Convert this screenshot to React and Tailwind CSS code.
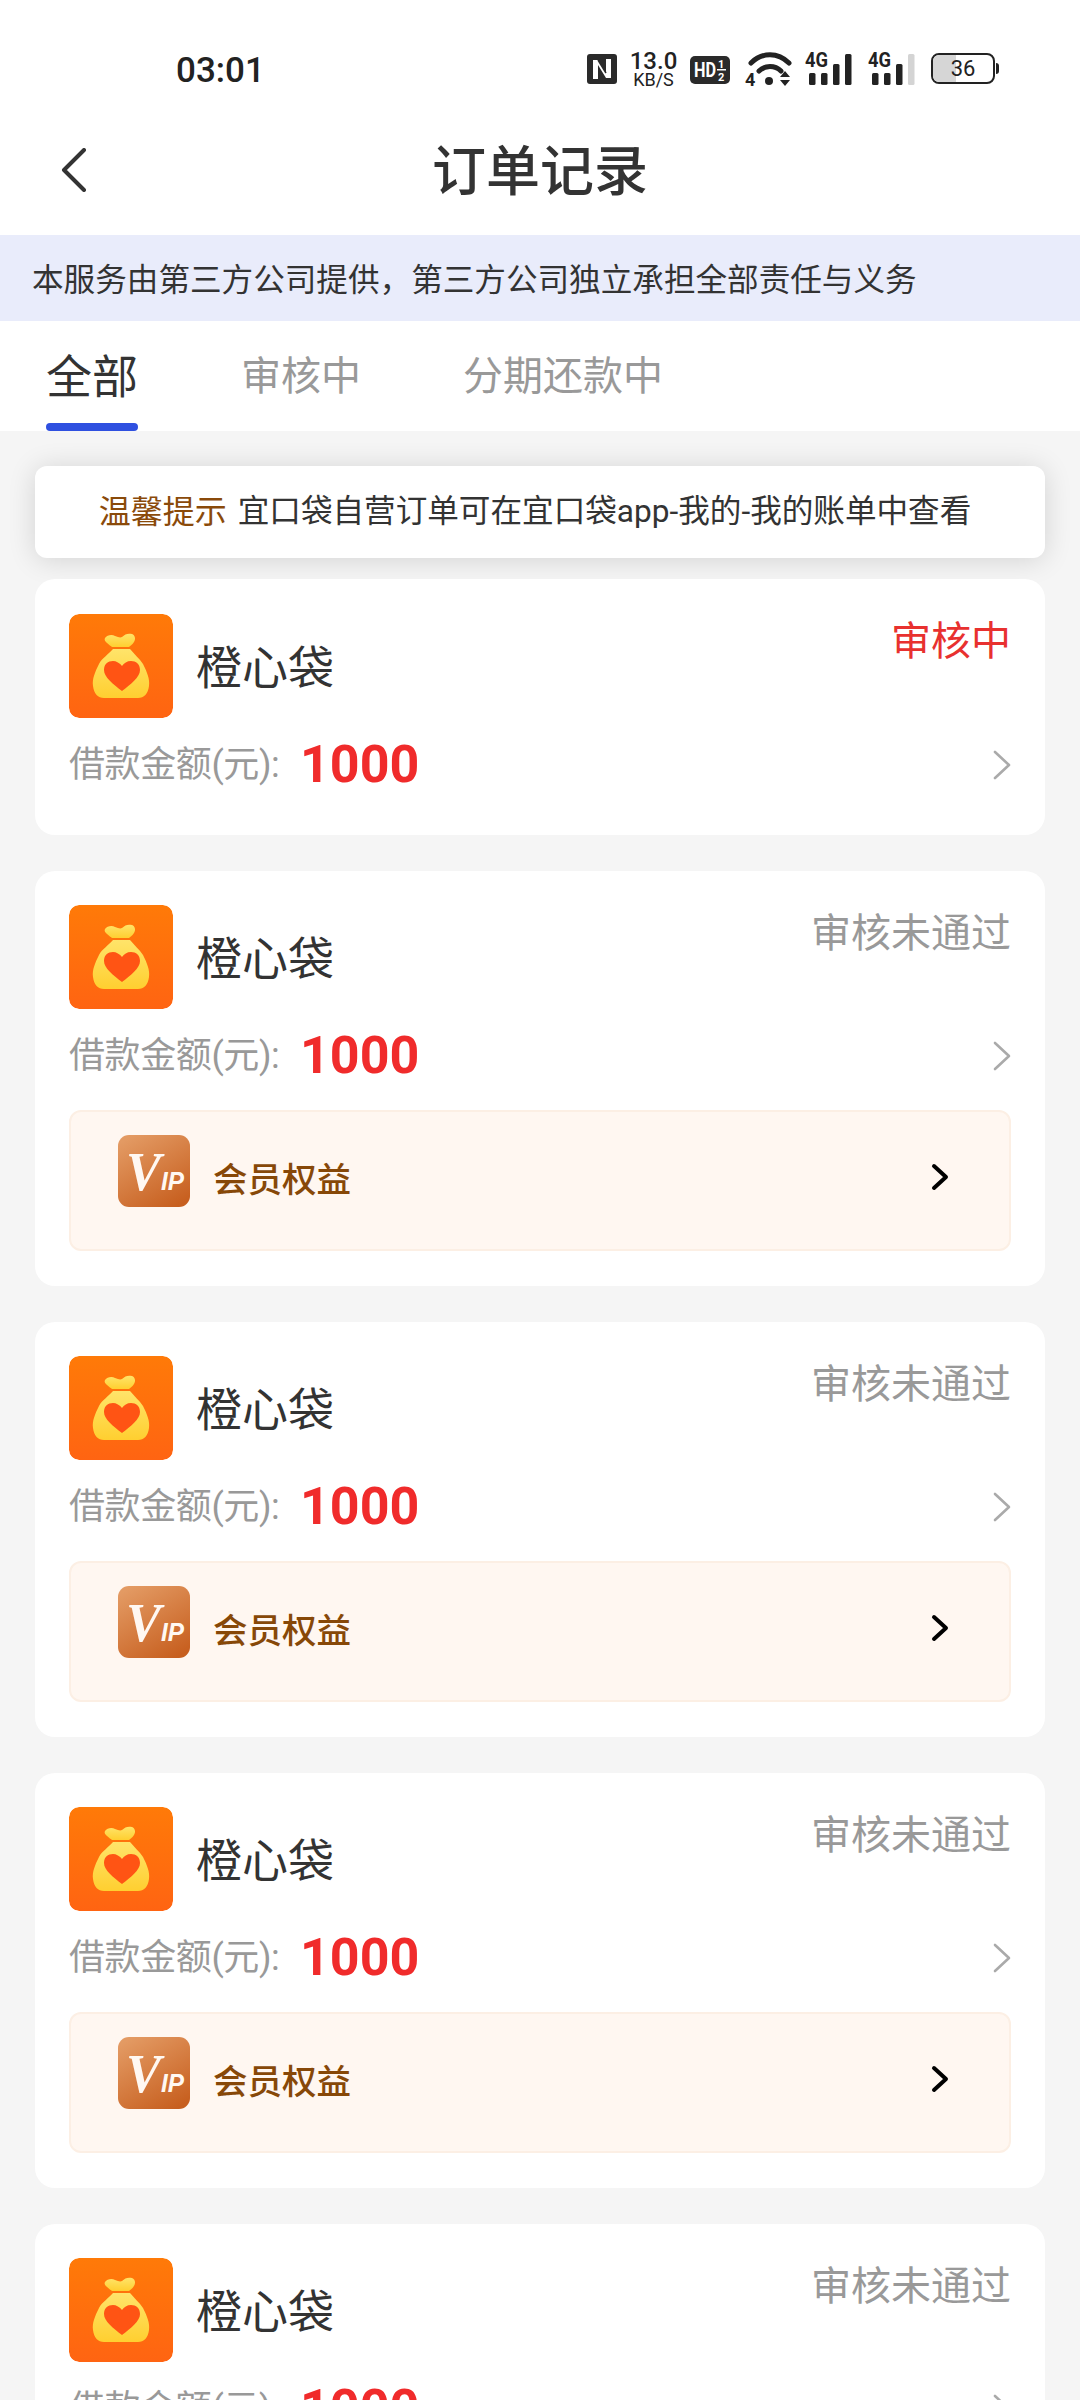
import React from "react";

function Bag({ id }) {
  return (
    <svg viewBox="0 0 104 104" className="w-[104px] h-[104px] shrink-0 rounded-[10px]">
      <defs>
        <linearGradient id={`o${id}`} x1="0" y1="0" x2="0" y2="1">
          <stop offset="0" stopColor="#ff7a08" />
          <stop offset="1" stopColor="#ff6412" />
        </linearGradient>
        <linearGradient id={`y${id}`} x1="0" y1="0" x2="0" y2="1">
          <stop offset="0" stopColor="#ffe46a" />
          <stop offset="1" stopColor="#ffcf30" />
        </linearGradient>
      </defs>
      <rect width="104" height="104" rx="10" fill={`url(#o${id})`} />
      <path d="M36 24c2-3 7-4 10-2 3 1 5 2 7 1 3-3 6-4 10-3 3 1 4 5 2 8-2 3-4 4-5 5H43c-1-1-3-2-5-4-2-2-3-3-2-5z" fill={`url(#y${id})`} />
      <path d="M44 35h17c4 5 9 9 13 15 4 8 7 15 6 22-1 8-5 12-11 12H35c-6 0-10-4-11-12-1-7 2-14 6-22 3-6 10-10 14-15z" fill={`url(#y${id})`} />
      <path d="M53 77C44 70 35 63 35 56c0-6 4-9 9-9 3 0 7 2 9 5 2-3 5-5 9-5 5 0 9 3 9 9 0 7-9 14-18 21z" fill="#ff5414" />
    </svg>
  );
}

function Vip({ id }) {
  return (
    <svg viewBox="0 0 72 72" className="w-[72px] h-[72px] shrink-0">
      <defs>
        <linearGradient id={`v${id}`} x1="0.2" y1="0" x2="0.8" y2="1">
          <stop offset="0" stopColor="#e39a63" />
          <stop offset="1" stopColor="#c75f1f" />
        </linearGradient>
      </defs>
      <rect width="72" height="72" rx="11" fill={`url(#v${id})`} />
      <text x="8" y="55" fontFamily="'Liberation Serif',serif" fontWeight="700" fontStyle="italic" fontSize="54" fill="#fff8f2" textLength="35" lengthAdjust="spacingAndGlyphs">V</text>
      <text x="43" y="55" fontFamily="'Liberation Sans',sans-serif" fontWeight="700" fontStyle="italic" fontSize="25" fill="#fff8f2" textLength="23" lengthAdjust="spacingAndGlyphs">IP</text>
    </svg>
  );
}

function Signal({ last }) {
  return (
    <svg viewBox="0 0 46 32" className="w-[46px] h-[32px] overflow-visible">
      <text x="-1" y="14" fontFamily="Roboto,sans-serif" fontWeight="700" fontSize="20" fill="#222" textLength="23" lengthAdjust="spacingAndGlyphs">4G</text>
      <rect x="3" y="20" width="6.5" height="12" rx="1.5" fill="#222" />
      <rect x="15" y="20" width="6.5" height="12" rx="1.5" fill="#222" />
      <rect x="27" y="11" width="6.5" height="21" rx="1.5" fill="#222" />
      <rect x="39" y="1" width="6.5" height="31" rx="1.5" fill={last ? "#d4d4d4" : "#222"} />
    </svg>
  );
}

function StatusBar() {
  return (
    <div className="h-[110px] flex items-start pt-[52px] pl-[176px] text-[#222]">
      <div className="w-[411px] h-[36px] flex items-center text-[35px] leading-none font-medium">03:01</div>
      <svg viewBox="0 0 30 30" className="w-[30px] h-[30px] mt-[2px]">
        <rect width="30" height="30" rx="3" fill="#2a2a2a" />
        <path d="M6 25V6h5l8 13V5h5v19h-5L11 11v14z" fill="#fff" />
        <path d="M11 6l8 13" stroke="#2a2a2a" strokeWidth="1.5" />
      </svg>
      <div className="ml-[13px] w-[47px] flex flex-col items-center -mt-[2px]">
        <span className="text-[24px] leading-[22px] font-medium">13.0</span>
        <span className="text-[18px] leading-[16px]">KB/S</span>
      </div>
      <svg viewBox="0 0 40 28" className="ml-[13px] mt-[4px] w-[40px] h-[28px] overflow-visible">
        <rect width="40" height="28" rx="5" fill="#2a2a2a" />
        <text x="4" y="21" fontFamily="Roboto,sans-serif" fontWeight="700" fontSize="20" fill="#fff" textLength="22" lengthAdjust="spacingAndGlyphs">HD</text>
        <text x="28" y="12" fontFamily="Roboto,sans-serif" fontWeight="700" fontSize="11" fill="#fff">1</text>
        <rect x="27" y="13" width="9" height="1.5" fill="#fff" />
        <text x="28" y="25" fontFamily="Roboto,sans-serif" fontWeight="700" fontSize="11" fill="#fff">2</text>
      </svg>
      <svg viewBox="0 0 48 34" className="ml-[15px] w-[48px] h-[34px] overflow-visible">
        <path d="M6 11C17 0 33 0 44 11" fill="none" stroke="#222" strokeWidth="5" strokeLinecap="round" />
        <path d="M14 19c6-6 16-6 22 0" fill="none" stroke="#222" strokeWidth="5" strokeLinecap="round" />
        <circle cx="24" cy="29" r="4" fill="#222" />
        <text x="0" y="34" fontFamily="Roboto,sans-serif" fontWeight="700" fontSize="18" fill="#222">4</text>
        <path d="M35 25l5-6 5 6zM35 28l5 6 5-6z" fill="#222" />
      </svg>
      <div className="ml-[13px] mt-[1px]"><Signal /></div>
      <div className="ml-[17px] mt-[1px]"><Signal last /></div>
      <div className="ml-[16px] relative w-[64px] h-[31px] rounded-[8px] border-[2.5px] border-[#222] overflow-hidden mt-[1px]">
        <div className="h-full w-[23px] bg-[#d6d6d6]" />
        <span className="absolute inset-0 flex items-center justify-center text-[22px] leading-none">36</span>
      </div>
      <div className="ml-[1px] mt-[11px] w-[3px] h-[11px] rounded-r bg-[#222]" />
    </div>
  );
}

function Card({ id, status, red, vip }) {
  return (
    <div className={`bg-white rounded-[20px] px-[34px] ${vip ? "pt-[34px] pb-[35px]" : "pt-[35px] pb-[37px]"}`}>
      <div className="flex items-start h-[104px]">
        <Bag id={id} />
        <div className={`ml-[23px] h-[104px] flex items-center text-[46px] leading-none text-[#333] ${vip ? "pt-[3px]" : "pt-[4px]"}`}>橙心袋</div>
        <div className={`ml-auto text-[40px] leading-[50px] ${vip ? "mt-[4px]" : "mt-[3px]"} ${red ? "text-[#e8312f]" : "text-[#999]"}`}>{status}</div>
      </div>
      <div className="mt-[14px] h-[66px] flex items-center">
        <span className="w-[231px] text-[36px] leading-none tracking-[-0.4px] text-[#999]">借款金额(元):</span>
        <span className="text-[52px] leading-none font-bold text-[#f02b2b]">1000</span>
        <svg viewBox="0 0 18 30" className="ml-auto w-[18px] h-[30px]">
          <path d="M2 2l14 13L2 28" fill="none" stroke="#aaa" strokeWidth="2.6" strokeLinecap="round" strokeLinejoin="round" />
        </svg>
      </div>
      {vip && (
        <div className="mt-[21px] h-[141px] rounded-[12px] border-2 border-[#fcefe4] bg-[#fff7f1] flex items-center pl-[47px] pr-[60px]">
          <div className="-mt-[20px]"><Vip id={id} /></div>
          <span className="ml-[23px] text-[34.5px] leading-none font-medium text-[#874808]">会员权益</span>
          <svg viewBox="0 0 18 28" className="ml-auto -mt-[7px] w-[18px] h-[28px]">
            <path d="M3 3l12 11L3 25" fill="none" stroke="#000" strokeWidth="4" strokeLinecap="round" strokeLinejoin="round" />
          </svg>
        </div>
      )}
    </div>
  );
}

export default function App() {
  return (
    <div className="w-[1080px] h-[2400px] overflow-hidden bg-[#f5f5f5] font-['Roboto','Noto_Sans_CJK_SC',sans-serif]">
      <div className="bg-white">
        <StatusBar />
        <div className="relative h-[125px] flex items-center justify-center">
          <svg viewBox="0 0 26 44" className="absolute left-[61px] top-[38px] w-[26px] h-[44px]">
            <path d="M23 2L3 22l20 20" fill="none" stroke="#333" strokeWidth="4" strokeLinecap="round" strokeLinejoin="round" />
          </svg>
          <span className="text-[54px] leading-none font-medium text-[#333]">订单记录</span>
        </div>
      </div>
      <div className="h-[86px] bg-[#e9ecfb] flex items-center pl-[32px] text-[31.6px] leading-none text-[#333] font-['Noto_Sans_CJK_SC',sans-serif]">
        {"本服务由第三方公司提供\uFF0C第三方公司独立承担全部责任与义务"}
      </div>
      <div className="h-[110px] bg-white flex items-start pl-[46px] shrink-0">
        <div className="flex flex-col w-[92px] h-[110px] items-center">
          <span className="mt-[28px] h-[56px] text-[46px] leading-[56px] text-[#333]">全部</span>
          <span className="mt-[18px] w-[92px] h-[8px] rounded-[4px] bg-[#2f50e0]" />
        </div>
        <span className="ml-[103px] mt-[31px] text-[40px] leading-[50px] text-[#999]">审核中</span>
        <span className="ml-[102px] mt-[31px] text-[40px] leading-[50px] text-[#999]">分期还款中</span>
      </div>
      <div className="px-[35px] pt-[35px]">
        <div className="h-[92px] rounded-[12px] bg-white flex items-center justify-center pr-[10px] text-[31.6px] leading-none text-[#333] shadow-[0_2px_28px_rgba(0,0,0,0.14)]">
          <span className="text-[#8a4a0a] text-[32px]">温馨提示</span>
          <span className="ml-[11px]">宜口袋自营订单可在宜口袋app-我的-我的账单中查看</span>
        </div>
        <div className="mt-[21px] flex flex-col gap-[36px]">
          <Card id="a" status="审核中" red />
          <Card id="b" status="审核未通过" vip />
          <Card id="c" status="审核未通过" vip />
          <Card id="d" status="审核未通过" vip />
          <Card id="e" status="审核未通过" vip />
        </div>
      </div>
    </div>
  );
}
